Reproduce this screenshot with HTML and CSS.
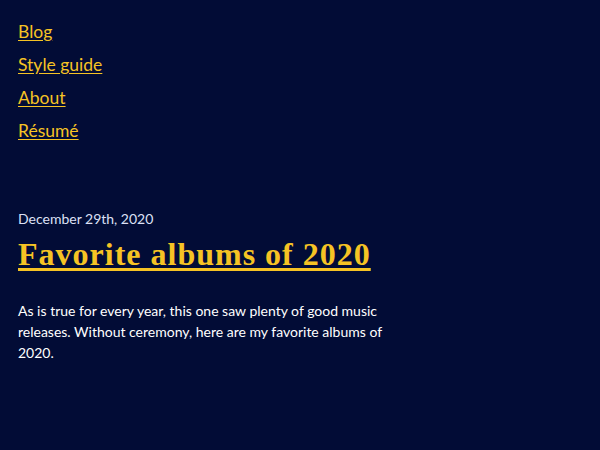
FILE: index.html
```html
<!DOCTYPE html>
<html>
<head>
<meta charset="utf-8">
<link rel="stylesheet" href="styles.css">
</head>
<body>
<nav class="nav">
  <a href="#">Blog</a>
  <a href="#">Style guide</a>
  <a href="#">About</a>
  <a href="#">Résumé</a>
</nav>
<main class="post">
  <div class="date">December 29th, 2020</div>
  <h1 class="title"><a href="#">Favorite albums of 2020</a></h1>
  <p class="intro">As is true for every year, this one saw plenty of good music releases. Without ceremony, here are my favorite albums of 2020.</p>
</main>
</body>
</html>
```
FILE: styles.css
```css
html, body {
  margin: 0;
  padding: 0;
  background: #020c36;
}
body {
  font-family: Lato, "Liberation Sans", sans-serif;
  color: #ffffff;
  padding: 20px 18px;
}
.nav {
  display: flex;
  flex-direction: column;
  align-items: flex-start;
  gap: 9px;
}
.nav a {
  color: #f6c324;
  font-size: 17.5px;
  line-height: 24px;
  text-decoration: underline;
  text-underline-offset: 2px;
}
.post {
  margin-top: 66px;
}
.date {
  font-size: 14px;
  line-height: 20px;
  color: #dde0f5;
}
.title {
  margin: 5px 0 0;
  font-family: "Liberation Serif", serif;
  font-weight: bold;
  font-size: 32px;
  line-height: 40px;
  letter-spacing: 1px;
}
.title a {
  color: #f6c324;
  text-decoration: underline;
  text-underline-offset: 3px;
}
.intro {
  margin: 26px 0 0;
  width: 390px;
  font-size: 14px;
  line-height: 21px;
}
```
